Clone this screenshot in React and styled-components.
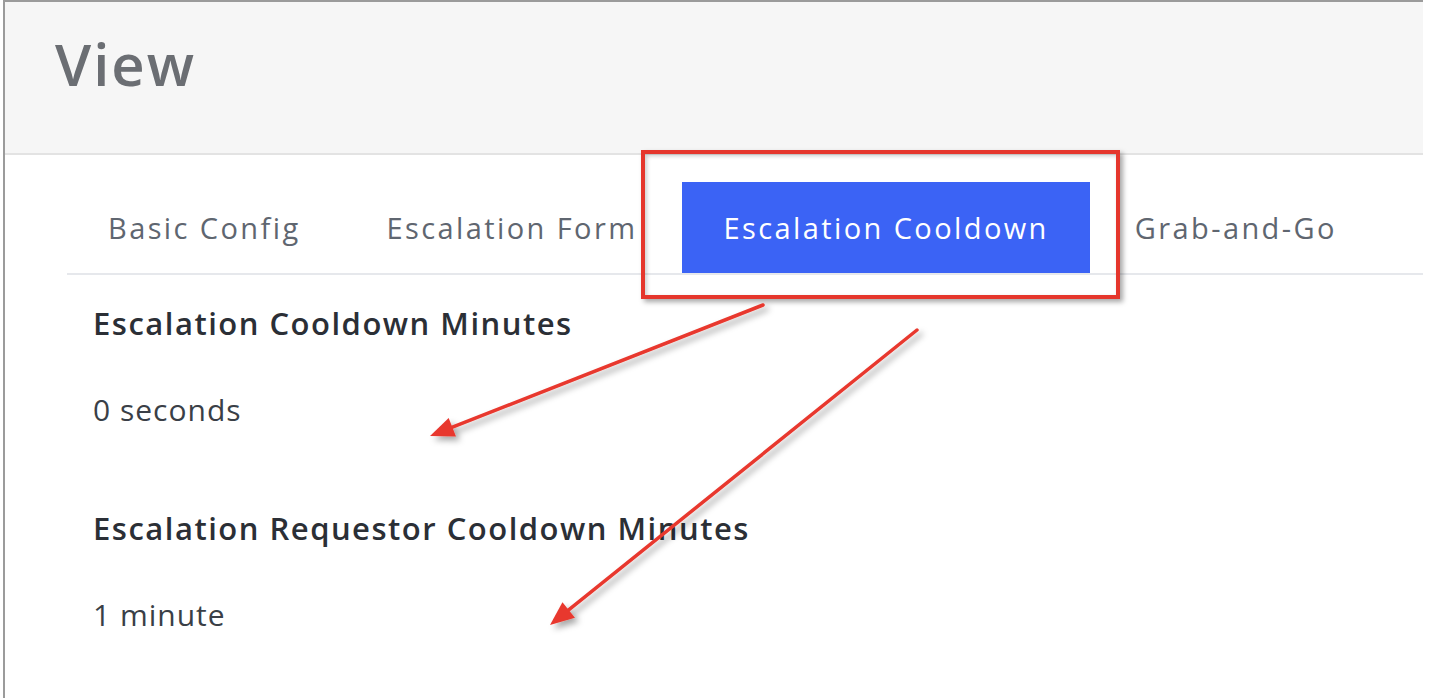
import React from 'react';
import styled, { createGlobalStyle } from 'styled-components';

const GlobalStyle = createGlobalStyle`
  html, body {
    margin: 0;
    padding: 0;
    background: #ffffff;
  }
  body {
    font-family: "Open Sans", "Noto Sans", sans-serif;
  }
`;

const Page = styled.div`
  position: relative;
  width: 1438px;
  height: 698px;
  overflow: hidden;
  background: #ffffff;
`;

const Frame = styled.div`
  margin-left: 3px;
  width: 1420px;
  height: 698px;
  border-top: 2px solid #9b9b9b;
  border-left: 2px solid #9b9b9b;
  box-sizing: border-box;
`;

const Header = styled.div`
  height: 153px;
  box-sizing: border-box;
  background: #f6f6f6;
  border-bottom: 2px solid #e3e3e3;
  display: flex;
  align-items: center;
  padding: 0 0 28px 50px;
`;

const Title = styled.h1`
  margin: 0;
  font-size: 58px;
  font-weight: 600;
  color: #6b6e73;
  letter-spacing: 2px;
`;

const TabList = styled.div`
  display: flex;
  gap: 4px;
  margin: 27px 0 0 62px;
  border-bottom: 2px solid #e6e8ec;
`;

const Tab = styled.div`
  height: 91px;
  display: flex;
  align-items: center;
  padding: 0 41px;
  font-size: 29px;
  letter-spacing: 2.4px;
  color: ${p => (p.$active ? '#ffffff' : '#5f6670')};
  background: ${p => (p.$active ? '#3b63f5' : 'transparent')};
`;

const Content = styled.div`
  padding: 28px 0 0 88px;
`;

const Field = styled.div`
  margin-bottom: 78px;
`;

const Label = styled.div`
  font-size: 31px;
  font-weight: 600;
  letter-spacing: 1.5px;
  color: #2b2f36;
  line-height: 40px;
`;

const Value = styled.div`
  margin-top: 47px;
  font-size: 30px;
  letter-spacing: 1px;
  color: #3a3f47;
  line-height: 40px;
`;

const Highlight = styled.div`
  position: absolute;
  left: 641px;
  top: 150px;
  width: 479px;
  height: 149px;
  box-sizing: border-box;
  border: 4px solid #e5362c;
  box-shadow: 3px 3px 5px rgba(0, 0, 0, 0.35), inset 2px 2px 4px rgba(0, 0, 0, 0.2);
  pointer-events: none;
`;

const Overlay = styled.svg`
  position: absolute;
  left: 0;
  top: 0;
  pointer-events: none;
`;

const arrows = [
  { x1: 763, y1: 305, x2: 430, y2: 436 },
  { x1: 917, y1: 330, x2: 550, y2: 625 },
];

function Arrow({ x1, y1, x2, y2 }) {
  const dx = x2 - x1;
  const dy = y2 - y1;
  const len = Math.hypot(dx, dy);
  const ux = dx / len;
  const uy = dy / len;
  const head = 24;
  const half = 10;
  const bx = x2 - ux * head;
  const by = y2 - uy * head;
  const pts = [
    [x2, y2],
    [bx - uy * half, by + ux * half],
    [bx + uy * half, by - ux * half],
  ]
    .map(p => p.join(','))
    .join(' ');
  return (
    <g filter="url(#shadow)">
      <line x1={x1} y1={y1} x2={bx + ux * 4} y2={by + uy * 4} stroke="#e8382e" strokeWidth="3.5" strokeLinecap="round" />
      <polygon points={pts} fill="#e8382e" />
    </g>
  );
}

const tabs = ['Basic Config', 'Escalation Form', 'Escalation Cooldown', 'Grab-and-Go'];

const fields = [
  { label: 'Escalation Cooldown Minutes', value: '0 seconds' },
  { label: 'Escalation Requestor Cooldown Minutes', value: '1 minute' },
];

export default function App() {
  return (
    <Page>
      <GlobalStyle />
      <Frame>
        <Header>
          <Title>View</Title>
        </Header>
        <TabList>
          {tabs.map(t => (
            <Tab key={t} $active={t === 'Escalation Cooldown'}>
              {t}
            </Tab>
          ))}
        </TabList>
        <Content>
          {fields.map(f => (
            <Field key={f.label}>
              <Label>{f.label}</Label>
              <Value>{f.value}</Value>
            </Field>
          ))}
        </Content>
      </Frame>
      <Highlight />
      <Overlay width="1438" height="698" viewBox="0 0 1438 698">
        <defs>
          <filter id="shadow" x="-20%" y="-20%" width="140%" height="140%">
            <feDropShadow dx="4" dy="4" stdDeviation="3" floodColor="#000" floodOpacity="0.35" />
          </filter>
        </defs>
        {arrows.map((a, i) => (
          <Arrow key={i} {...a} />
        ))}
      </Overlay>
    </Page>
  );
}
